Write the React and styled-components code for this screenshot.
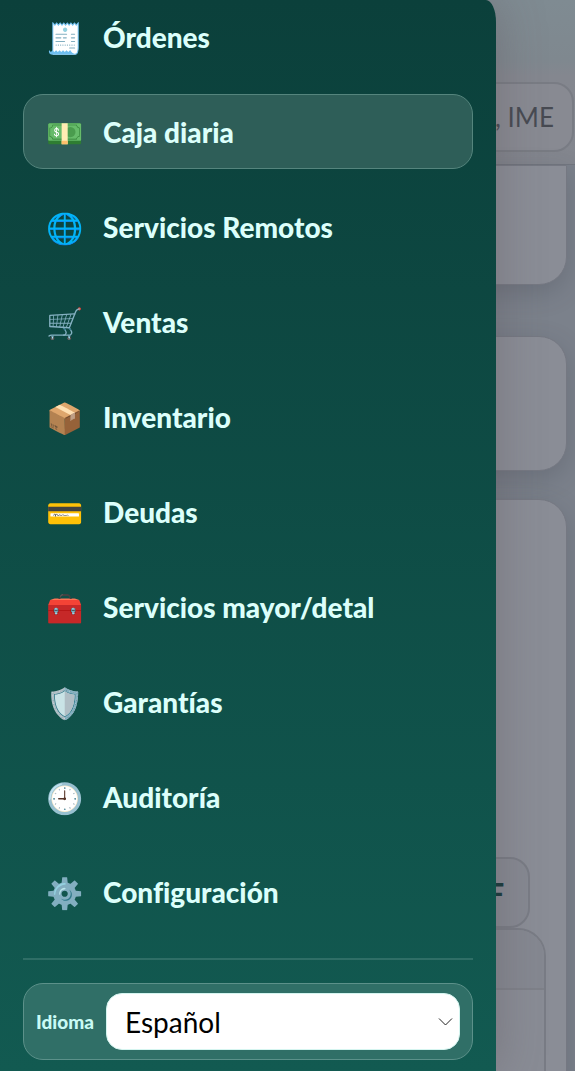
import React from 'react';
import { useState } from 'react'
import styled, { createGlobalStyle } from 'styled-components'

const GlobalStyle = createGlobalStyle`
    * {
        box-sizing: border-box;
    }
    body {
        margin: 0;
        background-color: #7b818b;
        font-family: Lato, "Noto Sans", sans-serif;
        font-variant-ligatures: none;
    }
`
const Page = styled.div`
    position: relative;
    height: 100vh;
    overflow: hidden;
`
const Topbar = styled.header`
    padding: 82px 1px 12px 24px;
    border-bottom: 1px solid #72767f;
    background: linear-gradient(#7f8b92, #7f888f 60px, #84878f 76px, #83868e);
`
const Search = styled.input`
    display: block;
    width: 100%;
    height: 70px;
    padding: 0 18px;
    border: 2px solid #797c84;
    border-radius: 20px;
    background-color: #888a92;
    color: #474a52;
    font-family: inherit;
    font-size: 26px;
    text-align: right;
`
const Content = styled.main`
    display: flex;
    flex-direction: column;
    padding-right: 8px;
`
const Card = styled.section`
    height: ${props => props.$height}px;
    margin-bottom: ${props => props.$gap}px;
    border: 1px solid #757882;
    border-radius: ${props => props.$cut ? "0 0 28px 28px" : "28px"};
    background-color: #8a8d96;
    box-shadow: 0 8px 24px rgba(60, 64, 74, 0.25);
`
const Panel = styled(Card)`
    display: flex;
    flex-direction: column;
    align-items: flex-end;
    padding: 357px 20px 0;
`
const Export = styled.button`
    height: 71px;
    margin-right: 16px;
    padding: 0 24px;
    border: 2px solid #797c85;
    border-radius: 20px;
    background-color: #868992;
    color: #16393b;
    font-family: inherit;
    font-size: 28px;
    font-weight: 900;
`
const Sheet = styled.div`
    width: 100%;
    height: 200px;
    border: 2px solid #797c85;
    border-radius: 28px;
    background-color: #898c95;
    overflow: hidden;
`
const SheetHead = styled.div`
    height: 60px;
    border-bottom: 2px solid #7e8189;
    background-color: #858891;
`
const Drawer = styled.aside`
    position: absolute;
    top: 0;
    bottom: 0;
    left: 0;
    width: calc(100% - 79px);
    padding: 0 23px;
    border-top-right-radius: 10px 22px;
    background: linear-gradient(#0b403b, #125a51);
    box-shadow: 0 0 48px rgba(85, 75, 80, 0.35);
`
const Menu = styled.nav`
    display: flex;
    flex-direction: column;
    gap: 20px;
    margin-top: -1px;
    padding-bottom: 29px;
    border-bottom: 2px solid #2f6e66;
`
const MenuLink = styled.a`
    display: flex;
    align-items: center;
    gap: 20px;
    height: 75px;
    padding: 0 21px;
    border: 1px solid ${props => props.$active ? "#55857d" : "transparent"};
    border-radius: 20px;
    background-color: ${props => props.$active ? "#2e5e58" : "transparent"};
    color: #dcfffb;
    font-size: 28px;
    font-weight: 900;
    text-decoration: none;
`
const Icon = styled.span`
    display: flex;
    justify-content: center;
    width: 38px;
    font-size: 30px;
    line-height: 34px;
`
const Language = styled.div`
    display: flex;
    align-items: center;
    gap: 12px;
    margin-top: 23px;
    padding: 9px 12px;
    border: 1px solid #5c918a;
    border-radius: 20px;
    background-color: #306f67;
`
const Label = styled.label`
    color: #c9fbf5;
    font-size: 19px;
    font-weight: 900;
`
const SelectBox = styled.div`
    position: relative;
    flex: 1;
`
const Select = styled.select`
    display: block;
    width: 100%;
    height: 57px;
    padding: 0 18px;
    border: 1px solid #d5f5f0;
    border-radius: 16px;
    appearance: none;
    background-color: white;
    color: black;
    font-family: inherit;
    font-size: 28px;
`
const Arrow = styled.svg`
    position: absolute;
    top: 24px;
    right: 7px;
    pointer-events: none;
`

const items = [
    { icon: "🧾", text: "Órdenes" },
    { icon: "💵", text: "Caja diaria", active: true },
    { icon: "🌐", text: "Servicios Remotos" },
    { icon: "🛒", text: "Ventas" },
    { icon: "📦", text: "Inventario" },
    { icon: "💳", text: "Deudas" },
    { icon: "🧰", text: "Servicios mayor/detal" },
    { icon: "🛡️", text: "Garantías" },
    { icon: "🕘", text: "Auditoría" },
    { icon: "⚙️", text: "Configuración" },
]

const App = () => {
    const [language, setLanguage] = useState("es");

  return (
    <Page>
    <GlobalStyle/>
    <Topbar>
        <Search aria-label="Buscar" defaultValue=", IME"/>
    </Topbar>
    <Content>
        <Card $height={120} $gap={51} $cut/>
        <Card $height={135} $gap={28}/>
        <Panel $height={640} $gap={0}>
            <Export>F</Export>
            <Sheet><SheetHead/></Sheet>
        </Panel>
    </Content>
    <Drawer>
        <Menu>
            {items.map((item) => (
                <MenuLink href="#" key={item.text} $active={item.active}>
                    <Icon aria-hidden="true">{item.icon}</Icon>
                    {item.text}
                </MenuLink>
            ))}
        </Menu>
        <Language>
            <Label htmlFor="language">Idioma</Label>
            <SelectBox>
                <Select id="language" value={language} onChange={(e) => setLanguage(e.target.value)}>
                    <option value="es">Español</option>
                </Select>
                <Arrow width="15" height="10" viewBox="0 0 15 10" fill="none" stroke="#222">
                    <path d="M1 1.5 7.5 8 14 1.5"/>
                </Arrow>
            </SelectBox>
        </Language>
    </Drawer>
    </Page>
  )
}

export default App
